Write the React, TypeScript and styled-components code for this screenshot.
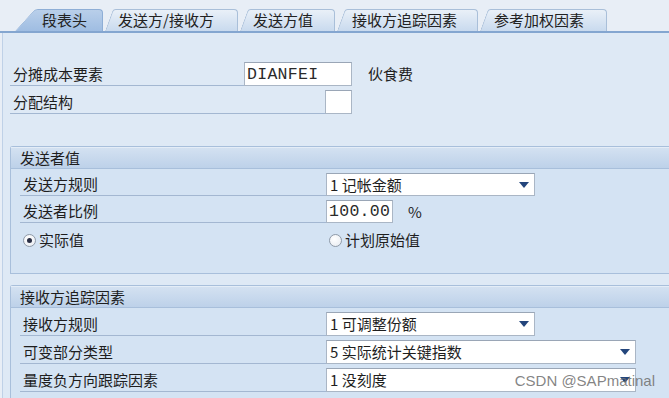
import styled, { createGlobalStyle } from 'styled-components';

const GlobalStyle = createGlobalStyle`
  html, body {
    margin: 0;
    padding: 0;
  }
  body {
    width: 669px;
    height: 398px;
    overflow: hidden;
    background: #e8eef6;
    font-family: "Noto Sans CJK SC", "Noto Sans", sans-serif;
    color: #1e1e1e;
  }
`;

const Page = styled.div`
  position: relative;
  width: 669px;
  height: 398px;
  display: flex;
  flex-direction: column;
  overflow: hidden;
`;

const TabStrip = styled.div`
  height: 33px;
  box-sizing: border-box;
  padding: 9px 0 0 15px;
  display: flex;
  gap: 2px;
  border-bottom: 2px solid #84a6d0;
`;

const Tab = styled.div<{ $w: number; $slant: number; $pad: number; $active?: boolean }>`
  position: relative;
  isolation: isolate;
  width: ${p => p.$w}px;
  height: 22px;
  box-sizing: border-box;
  padding-left: ${p => p.$pad}px;
  display: flex;
  align-items: center;
  font-size: 15px;
  line-height: 22px;
  color: #222;

  &::before,
  &::after {
    content: '';
    position: absolute;
    top: 0;
    bottom: 0;
    z-index: -1;
    background: ${p =>
      p.$active
        ? 'linear-gradient(#b9cfea, #9fbde2)'
        : 'linear-gradient(#e9f0f8, #c9daee)'};
    border-top: 1px solid ${p => (p.$active ? '#8eaed6' : '#a9bfd9')};
  }

  &::before {
    left: 0;
    width: ${p => p.$slant + 12}px;
    border-left: 1px solid ${p => (p.$active ? '#8eaed6' : '#a9bfd9')};
    border-top-left-radius: 3px;
    transform-origin: bottom left;
    transform: skewX(-${p => (Math.atan(p.$slant / 22) * 180) / Math.PI}deg);
  }

  &::after {
    left: ${p => p.$slant + 4}px;
    right: 0;
    border-right: 1px solid ${p => (p.$active ? '#8eaed6' : '#a9bfd9')};
    border-top-right-radius: 4px;
  }
`;

const Content = styled.div`
  flex: 1;
  margin-left: 2px;
  border-left: 1px solid #bfd1e7;
  background: #dee9f5;
  padding: 29px 0 0 7px;
  display: flex;
  flex-direction: column;
`;

const Row = styled.div<{ $top?: number; $h?: number }>`
  display: flex;
  align-items: stretch;
  height: ${p => p.$h ?? 24}px;
  margin-top: ${p => p.$top ?? 0}px;
`;

const Label = styled.div<{ $w: number }>`
  width: ${p => p.$w}px;
  box-sizing: border-box;
  padding-left: 3px;
  border-bottom: 1px solid #a3b7d1;
  display: flex;
  align-items: center;
  font-size: 15px;
  line-height: 20px;
  white-space: nowrap;
`;

const Input = styled.div<{ $w: number }>`
  width: ${p => p.$w}px;
  box-sizing: border-box;
  background: #fff;
  border: 1px solid #aab6c5;
  border-top-color: #9aa6b6;
  padding-left: 2px;
  display: flex;
  align-items: center;
  font-family: "Liberation Mono", "DejaVu Sans Mono", monospace;
  font-size: 16.5px;
  letter-spacing: 0.3px;
  color: #2a2a2a;
`;

const Note = styled.div<{ $gap: number }>`
  margin-left: ${p => p.$gap}px;
  display: flex;
  align-items: center;
  font-size: 15px;
  line-height: 20px;
`;

const Group = styled.div<{ $top: number }>`
  margin-top: ${p => p.$top}px;
  width: 700px;
  border: 1px solid #a8bfdb;
  border-right: none;
  border-top-left-radius: 3px;
  background: #d4e3f3;
`;

const GroupHeader = styled.div`
  height: 22px;
  box-sizing: border-box;
  padding-left: 9px;
  background: linear-gradient(#d3e1f1, #bdd1e9);
  border-top: 1px solid #e4edf7;
  border-bottom: 1px solid #a8bfdb;
  display: flex;
  align-items: center;
  font-size: 15px;
  line-height: 20px;
`;

const GroupBody = styled.div<{ $h: number }>`
  height: ${p => p.$h}px;
  box-sizing: border-box;
  padding: 4px 0 0 9px;
  display: flex;
  flex-direction: column;
  gap: 4px;
`;

const Dropdown = styled.div<{ $w: number }>`
  width: ${p => p.$w}px;
  box-sizing: border-box;
  background: #fff;
  border: 1px solid #aab6c5;
  border-top-color: #9aa6b6;
  padding: 0 5px 0 3px;
  display: flex;
  align-items: center;
  justify-content: space-between;
  font-size: 15px;
  line-height: 20px;
`;

const Arrow = styled.span`
  width: 0;
  height: 0;
  border-left: 5.5px solid transparent;
  border-right: 5.5px solid transparent;
  border-top: 6px solid #23457c;
`;

const RadioRow = styled.div`
  display: flex;
  align-items: center;
  height: 18px;
  margin-top: 4px;
`;

const RadioOption = styled.label<{ $w?: number }>`
  width: ${p => (p.$w ? `${p.$w}px` : 'auto')};
  display: flex;
  align-items: center;
  gap: 3px;
  font-size: 15px;
  line-height: 18px;
  padding-left: 3px;
  box-sizing: border-box;
`;

const RadioDot = styled.span<{ $checked?: boolean }>`
  width: 13px;
  height: 13px;
  box-sizing: border-box;
  border-radius: 50%;
  border: 1px solid #8f9aa8;
  background: radial-gradient(circle at 40% 35%, #ffffff, #e6eaf0);
  display: flex;
  align-items: center;
  justify-content: center;

  &::after {
    content: '';
    width: 5px;
    height: 5px;
    border-radius: 50%;
    background: ${p => (p.$checked ? '#2a2f45' : 'transparent')};
  }
`;

const Watermark = styled.div`
  position: absolute;
  right: 14px;
  bottom: 8px;
  font-family: "Liberation Sans", Arial, sans-serif;
  font-size: 15px;
  line-height: 18px;
  color: rgba(110, 110, 110, 0.85);
`;

const tabs = [
  { text: '段表头', w: 88, slant: 20, pad: 27, active: true },
  { text: '发送方/接收方', w: 133, slant: 8, pad: 13 },
  { text: '发送方值', w: 95, slant: 8, pad: 13 },
  { text: '接收方追踪因素', w: 141, slant: 8, pad: 15 },
  { text: '参考加权因素', w: 127, slant: 8, pad: 14 },
];

export default function App() {
  return (
    <Page>
      <GlobalStyle />
      <TabStrip>
        {tabs.map(t => (
          <Tab key={t.text} $w={t.w} $slant={t.slant} $pad={t.pad} $active={t.active}>
            {t.text}
          </Tab>
        ))}
      </TabStrip>
      <Content>
        <Row>
          <Label $w={234}>分摊成本要素</Label>
          <Input $w={108}>DIANFEI</Input>
          <Note $gap={16}>伙食费</Note>
        </Row>
        <Row $top={4}>
          <Label $w={315}>分配结构</Label>
          <Input $w={27} />
        </Row>

        <Group $top={32}>
          <GroupHeader>发送者值</GroupHeader>
          <GroupBody $h={104}>
            <Row $h={23}>
              <Label $w={306}>发送方规则</Label>
              <Dropdown $w={209}>
                <span>1 记帐金额</span>
                <Arrow />
              </Dropdown>
            </Row>
            <Row $h={23}>
              <Label $w={306}>发送者比例</Label>
              <Input $w={67}>100.00</Input>
              <Note $gap={15}>%</Note>
            </Row>
            <RadioRow>
              <RadioOption $w={306}>
                <RadioDot $checked />
                实际值
              </RadioOption>
              <RadioOption>
                <RadioDot />
                计划原始值
              </RadioOption>
            </RadioRow>
          </GroupBody>
        </Group>

        <Group $top={11}>
          <GroupHeader>接收方追踪因素</GroupHeader>
          <GroupBody $h={100}>
            <Row>
              <Label $w={306}>接收方规则</Label>
              <Dropdown $w={209}>
                <span>1 可调整份额</span>
                <Arrow />
              </Dropdown>
            </Row>
            <Row>
              <Label $w={306}>可变部分类型</Label>
              <Dropdown $w={310}>
                <span>5 实际统计关键指数</span>
                <Arrow />
              </Dropdown>
            </Row>
            <Row>
              <Label $w={306}>量度负方向跟踪因素</Label>
              <Dropdown $w={310}>
                <span>1 没刻度</span>
                <Arrow />
              </Dropdown>
            </Row>
          </GroupBody>
        </Group>
      </Content>
      <Watermark>CSDN @SAPmatinal</Watermark>
    </Page>
  );
}
